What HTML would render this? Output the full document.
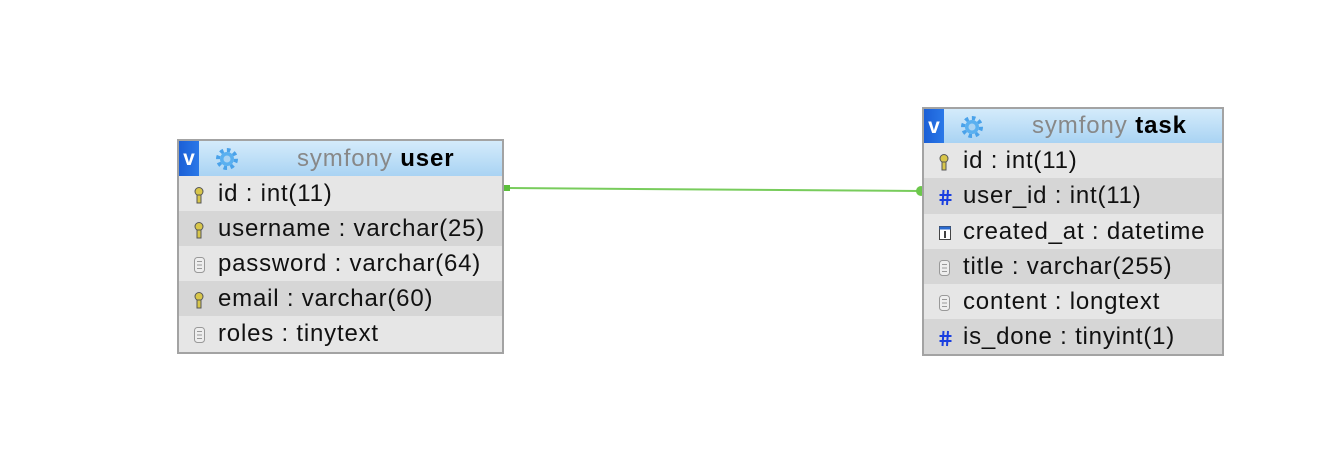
<!DOCTYPE html>
<html><head><style>
body{margin:0;width:1320px;height:456px;background:#fff;position:relative;overflow:hidden;font-family:"Liberation Sans",sans-serif}
.t{position:absolute;border:2px solid #a3a3a3;background:#e6e6e6;box-sizing:border-box;overflow:hidden}
.h{height:35px;background:linear-gradient(#d4ebfb,#a9d3f3);position:relative}
.v{position:absolute;left:0;top:0;width:20px;height:35px;background:linear-gradient(90deg,#1b5fd6,#2a78e8);color:#fff;font-weight:bold;font-size:21px;line-height:35px;text-align:center}
.g{position:absolute;left:36px;top:6px}
.ti{position:absolute;top:0;line-height:35px;font-size:24px;letter-spacing:0.9px;color:#888}
.ti b{color:#000}
.r{height:35px;line-height:35px;font-size:24px;letter-spacing:0.8px;color:#111;position:relative;padding-left:39px;white-space:nowrap}
.r:nth-child(even){background:#d6d6d6}
.r svg{position:absolute;left:15px;top:11px}
</style></head><body>
<svg width="1320" height="456" style="position:absolute;left:0;top:0">
<line x1="504" y1="188" x2="920" y2="191" stroke="#78cc5c" stroke-width="2"/>
<rect x="504" y="185" width="6" height="6" fill="#5cbf3c"/>
<circle cx="921" cy="191" r="5" fill="#6cc84c"/>
</svg>
<svg width="0" height="0" style="position:absolute">
<defs>
<g id="key"><ellipse cx="5" cy="4.5" rx="4" ry="4" fill="#d8c64a" stroke="#555" stroke-width="1"/><rect x="3" y="8" width="4" height="8" fill="#d8c64a" stroke="#555" stroke-width="1"/></g>
<g id="txt"><rect x="0.5" y="0.5" width="10" height="15" rx="3" fill="#eee" stroke="#999"/><path d="M3 4.5h5M3 8h5M3 11.5h5" stroke="#999"/></g>
<g id="hash"><path d="M4.5 1L3.5 16M9 1L8 16M0.5 6h12M0.5 11h12" stroke="#1a3fe0" stroke-width="2"/></g>
<g id="cal"><rect x="0.5" y="1.5" width="11" height="13" fill="#fff" stroke="#444"/><rect x="0.5" y="1.5" width="11" height="3" fill="#2a6ad0"/><path d="M6 6v7" stroke="#000" stroke-width="1.5"/></g>
<g id="gear"><circle cx="12" cy="12" r="9" fill="none" stroke="#4aa2ea" stroke-width="4" stroke-dasharray="3.5 3.5"/><circle cx="12" cy="12" r="7" fill="#5ab0f0"/><circle cx="12" cy="12" r="3.5" fill="#a9d3f3"/></g>
</defs></svg>

<div class="t" style="left:177px;top:139px;width:327px;height:215px">
<div class="h"><div class="v">v</div><svg class="g" width="24" height="24"><use href="#gear"/></svg><div class="ti" style="left:118px">symfony <b>user</b></div></div>
<div>
<div class="r"><svg width="13" height="17"><use href="#key"/></svg>id : int(11)</div>
<div class="r"><svg width="13" height="17"><use href="#key"/></svg>username : varchar(25)</div>
<div class="r"><svg width="13" height="17"><use href="#txt"/></svg>password : varchar(64)</div>
<div class="r"><svg width="13" height="17"><use href="#key"/></svg>email : varchar(60)</div>
<div class="r"><svg width="13" height="17"><use href="#txt"/></svg>roles : tinytext</div>
</div></div>

<div class="t" style="left:922px;top:107px;width:302px;height:249px">
<div class="h" style="height:34px"><div class="v" style="height:34px">v</div><svg class="g" width="24" height="24"><use href="#gear"/></svg><div class="ti" style="left:108px;line-height:34px">symfony <b>task</b></div></div>
<div>
<div class="r"><svg width="13" height="17"><use href="#key"/></svg>id : int(11)</div>
<div class="r" style="height:36px;line-height:36px"><svg width="13" height="17"><use href="#hash"/></svg>user_id : int(11)</div>
<div class="r"><svg width="13" height="17"><use href="#cal"/></svg>created_at : datetime</div>
<div class="r"><svg width="13" height="17"><use href="#txt"/></svg>title : varchar(255)</div>
<div class="r"><svg width="13" height="17"><use href="#txt"/></svg>content : longtext</div>
<div class="r"><svg width="13" height="17"><use href="#hash"/></svg>is_done : tinyint(1)</div>
</div></div>
</body></html>
